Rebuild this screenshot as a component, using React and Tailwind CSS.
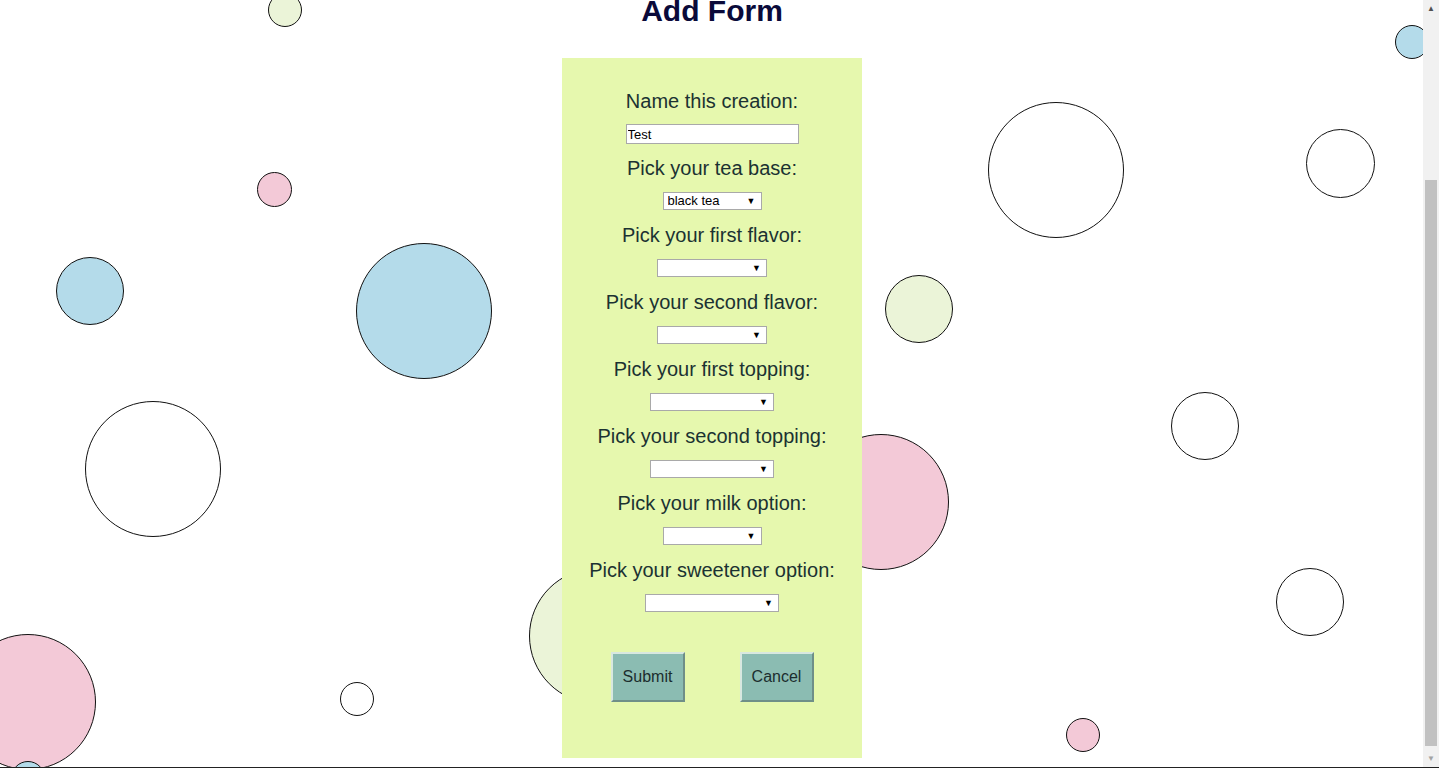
import React from 'react'

const bubbles = [
  { x: 268, y: -7, d: 34, c: 'bg-[#ebf4d8]' },
  { x: 1395, y: 25, d: 34, c: 'bg-[#b4dbea]' },
  { x: 257, y: 172, d: 35, c: 'bg-[#f3c9d7]' },
  { x: 988, y: 102, d: 136, c: 'bg-white' },
  { x: 1306, y: 129, d: 69, c: 'bg-white' },
  { x: 56, y: 257, d: 68, c: 'bg-[#b4dbea]' },
  { x: 356, y: 243, d: 136, c: 'bg-[#b4dbea]' },
  { x: 885, y: 275, d: 68, c: 'bg-[#ebf4d8]' },
  { x: 85, y: 401, d: 136, c: 'bg-white' },
  { x: 1171, y: 392, d: 68, c: 'bg-white' },
  { x: 813, y: 434, d: 136, c: 'bg-[#f3c9d7]' },
  { x: 529, y: 568, d: 136, c: 'bg-[#ebf4d8]' },
  { x: 1276, y: 568, d: 68, c: 'bg-white' },
  { x: -40, y: 634, d: 136, c: 'bg-[#f3c9d7]' },
  { x: 340, y: 682, d: 34, c: 'bg-white' },
  { x: 1066, y: 718, d: 34, c: 'bg-[#f3c9d7]' },
  { x: 11, y: 761, d: 34, c: 'bg-[#b4dbea]' },
]

const fields = [
  { label: 'Pick your tea base:', w: 99, value: 'black tea' },
  { label: 'Pick your first flavor:', w: 110 },
  { label: 'Pick your second flavor:', w: 110 },
  { label: 'Pick your first topping:', w: 124 },
  { label: 'Pick your second topping:', w: 124 },
  { label: 'Pick your milk option:', w: 99 },
  { label: 'Pick your sweetener option:', w: 134 },
]

function Select({ w, value }) {
  return (
    <div className="relative block h-[18px] bg-white border border-[#a9a9a9]" style={{ width: w }}>
      <select
        className="appearance-none block w-full h-[16px] p-0 pl-[4px] bg-transparent text-[13px] leading-[16px] text-black outline-none"
        defaultValue={value || ''}
      >
        <option value="">{''}</option>
        {value && <option value={value}>{value}</option>}
      </select>
      <span className="absolute right-[5px] top-[1px] text-[9px] leading-[14px] text-black pointer-events-none">▼</span>
    </div>
  )
}

function Field({ label, children }) {
  return (
    <div className="h-[67px] flex flex-col items-center">
      <span className="text-[20px] leading-[23px] text-[#1b3232]">{label}</span>
      <div className="mt-[12px] flex">{children}</div>
    </div>
  )
}

function Btn({ children }) {
  return (
    <button className="w-[74px] h-[50px] bg-[#8bbcb2] text-[16px] text-[#1b2e2e] border-2 border-t-[#d8e8e0] border-l-[#d8e8e0] border-r-[#6f8f88] border-b-[#6f8f88]">
      {children}
    </button>
  )
}

export default function App() {
  return (
    <div className="w-[1439px] h-[768px] flex overflow-hidden bg-white font-['Liberation_Sans',Arial,sans-serif]">
      <main className="relative flex-1 overflow-hidden border-b border-[#222]">
        {bubbles.map((b, i) => (
          <div
            key={i}
            className={`absolute rounded-full border-[1.5px] border-[#111] ${b.c}`}
            style={{ left: b.x, top: b.y, width: b.d, height: b.d }}
          />
        ))}
        <div className="relative z-10 flex flex-col items-center">
          <h1 className="-mt-[8px] text-[30px] leading-[37px] font-bold text-[#0a0a3a] pl-[1px]">Add Form</h1>
          <form className="mt-[29px] ml-[1px] w-[300px] h-[700px] bg-[#e6f8ae] flex flex-col items-center pt-[32px]">
            <Field label="Name this creation:">
              <input
                defaultValue="Test"
                className="block w-[173px] h-[20px] -mt-[1px] bg-white border border-[#a9a9a9] px-[1px] text-[13px] leading-[18px] text-black outline-none"
              />
            </Field>
            {fields.map((f) => (
              <Field key={f.label} label={f.label}>
                <Select w={f.w} value={f.value} />
              </Field>
            ))}
            <div className="mt-[26px] flex gap-[55px]">
              <Btn>Submit</Btn>
              <Btn>Cancel</Btn>
            </div>
          </form>
        </div>
      </main>
      <aside className="w-[16px] h-full bg-[#f1f1f1] flex flex-col items-center border-b border-[#222]">
        <span className="h-[17px] text-[8px] leading-[17px] text-[#505050]">▲</span>
        <div className="mt-[163px] w-[12px] h-[566px] bg-[#c1c1c1]" />
        <span className="mt-auto h-[17px] text-[8px] leading-[17px] text-[#a3a3a3]">▼</span>
      </aside>
    </div>
  )
}
